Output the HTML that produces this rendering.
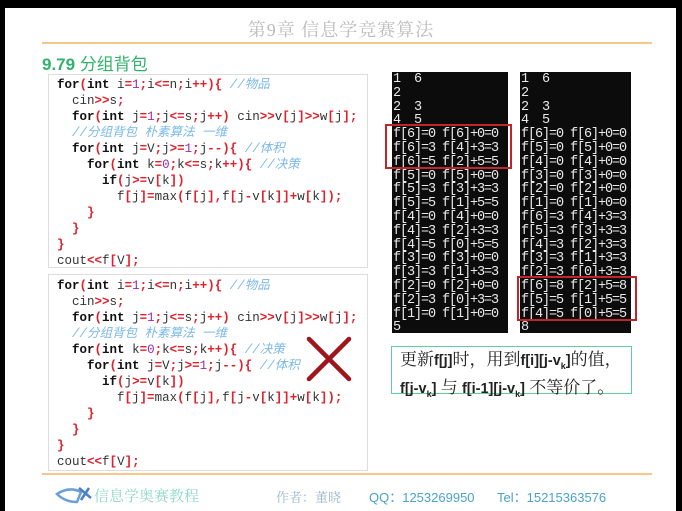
<!DOCTYPE html>
<html><head><meta charset="utf-8"><style>
*{margin:0;padding:0;box-sizing:border-box}
body{width:682px;height:511px;background:#000;position:relative;overflow:hidden;font-family:"Liberation Sans","Noto Sans CJK SC",sans-serif}
.page{position:absolute;left:5px;top:8px;width:671px;height:503px;background:#fff}
.abs{position:absolute}
.title{left:0;width:682px;top:16px;text-align:center;font-family:"Liberation Serif","Noto Serif CJK SC",serif;font-size:18px;color:#bbb;letter-spacing:1px}
.hl{height:2px;background:#f5c98a}
.h2{left:42px;top:50px;font-size:17px;color:#2fb36b;font-weight:bold}
.h2 span{font-weight:normal}
.code{left:48px;width:320px;border:1px solid #ddd;background:#fff}
.code pre{position:absolute;left:8px;font-family:"Liberation Mono","Noto Sans CJK SC",monospace;font-size:12.5px;line-height:16px;color:#333}
.k{font-weight:bold;color:#111}
.r{color:#e0202a;font-weight:bold}
.n{color:#9b2aa8}
.c{color:#7ab8e8;font-style:italic}
.con{background:#0c0c0c;color:#e8e8e8;font-family:"Liberation Mono",monospace;font-size:13.5px;letter-spacing:-1.1px;line-height:13.8px;white-space:pre;padding:1px 0 0 1px}
.rb{border:2px solid #c0252b}
.note{left:391px;top:346px;width:241px;height:48px;border:1px solid #5fcf9f;font-family:"Liberation Serif","Noto Serif CJK SC",serif;font-size:17px;line-height:21px;padding:2px 0 0 8px;color:#222;white-space:nowrap}
.note b{font-family:"Liberation Sans",sans-serif;font-size:14.5px}
.note sub{font-size:9px}
.foot{top:487px;font-size:13px;color:#4aa3c8}
</style></head><body>
<div class="page"></div>
<div class="abs title">第9章 信息学竞赛算法</div>
<div class="abs hl" style="left:42px;top:42px;width:610px"></div>
<div class="abs h2">9.79 <span>分组背包</span></div>

<div class="abs code" style="top:74px;height:194px">
<pre style="top:2px"><span class="k">for</span><span class="r">(</span><span class="k">int</span> i<span class="r">=</span><span class="n">1</span><span class="r">;</span>i<span class="r">&lt;=</span>n<span class="r">;</span>i<span class="r">++){</span> <span class="c">//物品</span>
  cin<span class="r">&gt;&gt;</span>s<span class="r">;</span>
  <span class="k">for</span><span class="r">(</span><span class="k">int</span> j<span class="r">=</span><span class="n">1</span><span class="r">;</span>j<span class="r">&lt;=</span>s<span class="r">;</span>j<span class="r">++)</span> cin<span class="r">&gt;&gt;</span>v<span class="r">[</span>j<span class="r">]&gt;&gt;</span>w<span class="r">[</span>j<span class="r">];</span>
  <span class="c">//分组背包 朴素算法 一维</span>
  <span class="k">for</span><span class="r">(</span><span class="k">int</span> j<span class="r">=</span>V<span class="r">;</span>j<span class="r">&gt;=</span><span class="n">1</span><span class="r">;</span>j<span class="r">--){</span> <span class="c">//体积</span>
    <span class="k">for</span><span class="r">(</span><span class="k">int</span> k<span class="r">=</span><span class="n">0</span><span class="r">;</span>k<span class="r">&lt;=</span>s<span class="r">;</span>k<span class="r">++){</span> <span class="c">//决策</span>
      <span class="k">if</span><span class="r">(</span>j<span class="r">&gt;=</span>v<span class="r">[</span>k<span class="r">])</span>
        f<span class="r">[</span>j<span class="r">]=</span>max<span class="r">(</span>f<span class="r">[</span>j<span class="r">],</span>f<span class="r">[</span>j<span class="r">-</span>v<span class="r">[</span>k<span class="r">]]+</span>w<span class="r">[</span>k<span class="r">]);</span>
    <span class="r">}</span>
  <span class="r">}</span>
<span class="r">}</span>
cout<span class="r">&lt;&lt;</span>f<span class="r">[</span>V<span class="r">];</span></pre>
</div>

<div class="abs code" style="top:274px;height:197px">
<pre style="top:3px"><span class="k">for</span><span class="r">(</span><span class="k">int</span> i<span class="r">=</span><span class="n">1</span><span class="r">;</span>i<span class="r">&lt;=</span>n<span class="r">;</span>i<span class="r">++){</span> <span class="c">//物品</span>
  cin<span class="r">&gt;&gt;</span>s<span class="r">;</span>
  <span class="k">for</span><span class="r">(</span><span class="k">int</span> j<span class="r">=</span><span class="n">1</span><span class="r">;</span>j<span class="r">&lt;=</span>s<span class="r">;</span>j<span class="r">++)</span> cin<span class="r">&gt;&gt;</span>v<span class="r">[</span>j<span class="r">]&gt;&gt;</span>w<span class="r">[</span>j<span class="r">];</span>
  <span class="c">//分组背包 朴素算法 一维</span>
  <span class="k">for</span><span class="r">(</span><span class="k">int</span> k<span class="r">=</span><span class="n">0</span><span class="r">;</span>k<span class="r">&lt;=</span>s<span class="r">;</span>k<span class="r">++){</span> <span class="c">//决策</span>
    <span class="k">for</span><span class="r">(</span><span class="k">int</span> j<span class="r">=</span>V<span class="r">;</span>j<span class="r">&gt;=</span><span class="n">1</span><span class="r">;</span>j<span class="r">--){</span> <span class="c">//体积</span>
      <span class="k">if</span><span class="r">(</span>j<span class="r">&gt;=</span>v<span class="r">[</span>k<span class="r">])</span>
        f<span class="r">[</span>j<span class="r">]=</span>max<span class="r">(</span>f<span class="r">[</span>j<span class="r">],</span>f<span class="r">[</span>j<span class="r">-</span>v<span class="r">[</span>k<span class="r">]]+</span>w<span class="r">[</span>k<span class="r">]);</span>
    <span class="r">}</span>
  <span class="r">}</span>
<span class="r">}</span>
cout<span class="r">&lt;&lt;</span>f<span class="r">[</span>V<span class="r">];</span></pre>
</div>

<svg class="abs" style="left:305px;top:335px" width="48" height="48" viewBox="0 0 48 48">
<path d="M4 4 L44 44 M44 4 L4 44" stroke="#a0151c" stroke-width="4.5" stroke-linecap="round"/>
</svg>

<div class="abs con" style="left:392px;top:72px;width:116px;height:261px">1  6
2
2  3
4  5
f[6]=0 f[6]+0=0
f[6]=3 f[4]+3=3
f[6]=5 f[2]+5=5
f[5]=0 f[5]+0=0
f[5]=3 f[3]+3=3
f[5]=5 f[1]+5=5
f[4]=0 f[4]+0=0
f[4]=3 f[2]+3=3
f[4]=5 f[0]+5=5
f[3]=0 f[3]+0=0
f[3]=3 f[1]+3=3
f[2]=0 f[2]+0=0
f[2]=3 f[0]+3=3
f[1]=0 f[1]+0=0
5</div>
<div class="abs con" style="left:520px;top:72px;width:111px;height:261px">1  6
2
2  3
4  5
f[6]=0 f[6]+0=0
f[5]=0 f[5]+0=0
f[4]=0 f[4]+0=0
f[3]=0 f[3]+0=0
f[2]=0 f[2]+0=0
f[1]=0 f[1]+0=0
f[6]=3 f[4]+3=3
f[5]=3 f[3]+3=3
f[4]=3 f[2]+3=3
f[3]=3 f[1]+3=3
f[2]=3 f[0]+3=3
f[6]=8 f[2]+5=8
f[5]=5 f[1]+5=5
f[4]=5 f[0]+5=5
8</div>
<div class="abs rb" style="left:385px;top:124px;width:127px;height:45px"></div>
<div class="abs rb" style="left:517px;top:276px;width:120px;height:45px"></div>

<div class="abs note">更新<b>f[j]</b>时，用到<b>f[i][j-v<sub>k</sub>]</b>的值，<br><b>f[j-v<sub>k</sub>]</b> 与 <b>f[i-1][j-v<sub>k</sub>]</b> 不等价了。</div>

<div class="abs hl" style="left:42px;top:473px;width:610px"></div>
<svg class="abs" style="left:55px;top:484px" width="40" height="22" viewBox="0 0 40 22">
<path d="M2 10 Q14 2 26 8 L22 18 Q10 18 2 10Z" fill="none" stroke="#6aa0d8" stroke-width="2.5"/>
<path d="M24 4 L36 14 M34 4 L26 16" stroke="#4a80c8" stroke-width="2.5"/>
</svg>
<div class="abs foot" style="left:94px;top:485px;font-family:'Liberation Serif','Noto Serif CJK SC',serif;font-size:15px;color:#8fd8c8">信息学奥赛教程</div>
<div class="abs foot" style="left:276px;font-family:'Liberation Serif','Noto Serif CJK SC',serif;color:#9ab8c8">作者：董晓</div>
<div class="abs foot" style="left:369px">QQ：1253269950</div>
<div class="abs foot" style="left:497px">Tel：15215363576</div>
</body></html>
